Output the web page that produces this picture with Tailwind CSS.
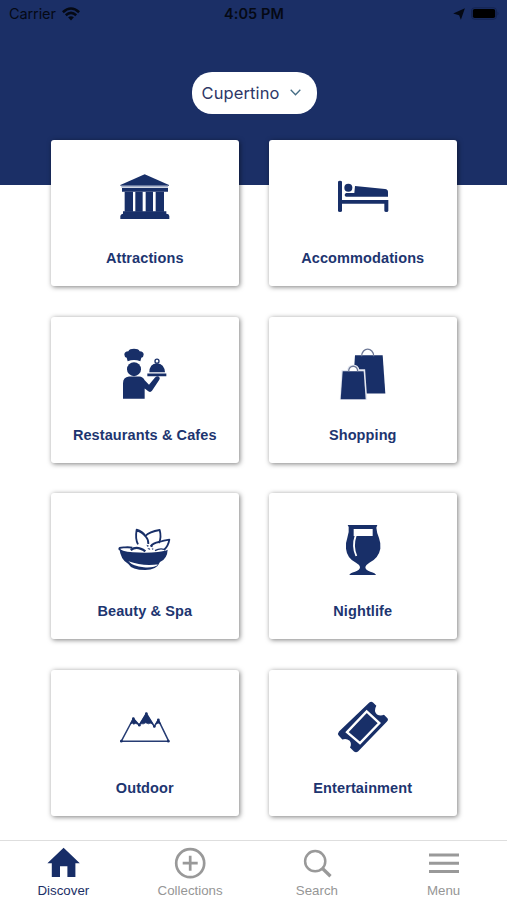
<!DOCTYPE html>
<html lang="en">
<head>
<meta charset="utf-8">
<title>Discover</title>
<script src="https://cdn.jsdelivr.net/npm/@tailwindcss/browser@4"></script>
</head>
<body class="bg-white">
<div class="relative flex h-[900px] w-[507px] flex-col overflow-hidden bg-white font-['Liberation_Sans',sans-serif] text-[#1d3570]">
  <div class="absolute inset-x-0 top-0 h-[185px] bg-[#1b2f66]"></div>

  <header class="relative grid h-7 shrink-0 grid-cols-3 items-center pl-[9px] pr-[8px] font-['Inter',sans-serif] text-[14.5px] text-[#050914]">
    <div class="flex items-center gap-[6px]">
      <span class="tracking-[-0.1px]">Carrier</span>
      <svg class="h-[14px] w-[18px]" viewBox="0 0 18 14" fill="none" stroke="currentColor" stroke-width="2.6"><path d="M.9 5.2Q9-2.2 17.1 5.2M3.8 8.2Q9 3.7 14.2 8.2"/><path d="M6.1 10.3Q9 8 11.9 10.3L9 13.4Z" fill="currentColor" stroke="none"/></svg>
    </div>
    <span class="text-center font-semibold tracking-[0.1px]">4:05 PM</span>
    <div class="flex items-center justify-end gap-[6px]">
      <svg class="mb-px h-3 w-3" viewBox="0 0 12 12" fill="currentColor"><path d="M11.9.2 7.9 11.8 6.1 7.2.2 5.6Z"/></svg>
      <svg class="mb-px h-[13px] w-[28px]" viewBox="0 0 28 13"><rect x=".5" y=".8" width="25" height="11.4" rx="3" fill="none" stroke="#142452"/><rect x="1.8" y="2" width="22.4" height="9" rx="1.8" fill="#000"/><path d="M26.5 4.5q2 2 0 4z" fill="#142452"/></svg>
    </div>
  </header>

  <div class="relative flex h-[112px] shrink-0 justify-center pl-px pt-[44px]">
    <button class="flex h-[42px] w-[125px] items-center gap-[10px] rounded-[20px] bg-white pl-[10px] font-['Inter',sans-serif] text-[16.5px] tracking-[0.12px] text-[#2e3767]">
      <span>Cupertino</span>
      <svg class="mb-[2px] h-[7px] w-[11px] shrink-0" viewBox="0 0 11 7" fill="none" stroke="#456d85" stroke-width="1.3"><path d="m.7.8 4.8 5 4.8-5"/></svg>
    </button>
  </div>

  <main class="relative grid shrink-0 grid-cols-[188.5px_188.5px] grid-rows-[146px_146px_146px_146px] gap-x-[29.5px] gap-y-[30.5px] pl-[50.5px] text-[14.5px] font-bold tracking-[0.1px]">
    <article class="flex flex-col items-center rounded-[3px] bg-white pt-5 shadow-[1px_1px_5px_rgba(0,0,0,0.5)]">
      <svg class="h-[70px] w-[90px]" viewBox="0 0 270 210" fill="#182f68"><path d="M61 75 134 43l73 32v2H61z"/><path d="M66 84h138v11H66z"/><path d="M74 95h25v60H74zm32 0h22v60h-22zm31 0h22v60h-22zm30 0h25v60h-25z"/><path d="M69 154h130v7q8 0 9 7v9H61v-9q1-6 8-7z"/><path d="M64 80h140" stroke="#a5b0ca" stroke-width="5"/></svg>
      <h2 class="mt-[17px] leading-[22px]">Attractions</h2>
    </article>
    <article class="flex flex-col items-center rounded-[3px] bg-white pt-5 shadow-[1px_1px_5px_rgba(0,0,0,0.5)]">
      <svg class="h-[70px] w-[90px]" viewBox="-6 0 270 210" fill="#182f68"><path d="M54 66q0-4 6-4t6 4v54h139v32q0 4-6 4t-6-4v-21H66v21q0 4-6 4t-6-4z"/><circle cx="85" cy="83" r="12"/><path d="M79 99h24l2-21 90 9q9 1 9 9v14H79q-5 0-5-5t5-6z"/></svg>
      <h2 class="mt-[17px] leading-[22px]">Accommodations</h2>
    </article>
    <article class="flex flex-col items-center rounded-[3px] bg-white pt-5 shadow-[1px_1px_5px_rgba(0,0,0,0.5)]">
      <svg class="h-[70px] w-[90px]" viewBox="0 4.5 270 210" fill="#182f68"><path d="M83 77 80 67q-7-2-7-10 0-9 12-10 4-7 17-7t17 7q12 1 12 10 0 8-7 10l-3 10q-19-7-38 0z"/><circle cx="102" cy="101" r="21"/><path d="M69 190v-47q0-18 18-20h31q10 0 16 11l13 14 18-22q6-6 11-3 6 4 2 10l-22 33q-5 6-11 1l-11-8v31z"/><path d="M142 114h57v8h-57zm6-4q0-25 23-27 22 2 24 27z"/><circle cx="171" cy="77" r="6" fill="none" stroke="#182f68" stroke-width="4"/></svg>
      <h2 class="mt-[17px] leading-[22px]">Restaurants &amp; Cafes</h2>
    </article>
    <article class="flex flex-col items-center rounded-[3px] bg-white pt-5 shadow-[1px_1px_5px_rgba(0,0,0,0.5)]">
      <svg class="h-[70px] w-[90px]" viewBox="-6 4.5 270 210" fill="#182f68"><path d="M105 59h83l8 115H98z"/><path d="M125 62c0-28 36-28 36 0" fill="none" stroke="#6d7896" stroke-width="4"/><path d="M67 106h17q0-16 15-16t17 14h17l6 86H62z" fill="#fff" stroke="#e3e7f0" stroke-width="5"/><path d="M68 107h63l6 84H62z"/><path d="M86 108c0-21 27-21 27 0" fill="none" stroke="#6d7896" stroke-width="4"/></svg>
      <h2 class="mt-[17px] leading-[22px]">Shopping</h2>
    </article>
    <article class="flex flex-col items-center rounded-[3px] bg-white pt-5 shadow-[1px_1px_5px_rgba(0,0,0,0.5)]">
      <svg class="h-[70px] w-[90px]" viewBox="0 -6 270 210" fill="#182f68"><g fill="none" stroke="#182f68" stroke-width="5.5" stroke-linejoin="round"><path d="M114 88Q105 72 110 44q17 4 26 19 12-13 43-18 6 22-2 39M110 46q17 5 26 18"/><path d="M136 63Q146 74 145 87"/><path d="M152 94q7-10 25-13 14-5 31-7-3 19-16 31"/><path d="M165 107q14-8 27-4" stroke-width="4"/><path d="M60 105Q52 96 75 97q12-1 22 1"/><path d="M92 105q14-10 29-4 9 3 15 8" stroke-width="7"/></g><path d="M58 99q3 10 41 13 45 3 74-1 22-3 30-7-1 27-23 37-10 24-44 24-41 0-51-18-24-13-27-48zm27 40q14 15 46 18 31 3 45-9-47 7-91-9z" fill-rule="evenodd"/><path d="m139 89 8 3-4 4zm11 6 9-5-2 7zm-8 6 6-2 3 6zm13-1 6 1-3 4z"/></svg>
      <h2 class="mt-[17px] leading-[22px]">Beauty &amp; Spa</h2>
    </article>
    <article class="flex flex-col items-center rounded-[3px] bg-white pt-5 shadow-[1px_1px_5px_rgba(0,0,0,0.5)]">
      <svg class="h-[70px] w-[90px]" viewBox="-6 -6 270 210" fill="#182f68"><path d="M83 30h89l-3 8q1 14 8 31 6 16 4 32-5 28-33 42-11 7-12 13 0 9 15 14 16 4 17 10H88q1-6 17-10 15-5 15-14-1-7-12-13-27-13-30-42-2-17 4-33 6-15 4-32z"/><path d="M101 42h57v21h-57z" fill="#fff"/><path d="M107 62q-11 32 2 61" fill="none" stroke="#fff" stroke-width="5.5"/></svg>
      <h2 class="mt-[17px] leading-[22px]">Nightlife</h2>
    </article>
    <article class="flex flex-col items-center rounded-[3px] bg-white pt-5 shadow-[1px_1px_5px_rgba(0,0,0,0.5)]">
      <svg class="h-[70px] w-[90px]" viewBox="0 -16.5 270 210" fill="none" stroke="#263c73" stroke-width="4.5" stroke-linejoin="round"><path d="M64 137 100 69l18 20 21-35 24 39 12-20 31 64z"/><path d="m91 86 9-18 16 19-9-3-6 2-4-3zm28-1 20-31 20 32-8-3-6 2-8-3-6 3zm48 0 8-13 7 14-6-3z" fill="#182f68" stroke="#182f68" stroke-width="2"/><g fill="#182f68" stroke="none"><circle cx="64" cy="137" r="4"/><circle cx="100" cy="69" r="4"/><circle cx="118" cy="89" r="4"/><circle cx="139" cy="54" r="4"/><circle cx="163" cy="93" r="4"/><circle cx="175" cy="73" r="4"/><circle cx="205" cy="137" r="4"/></g></svg>
      <h2 class="mt-[17px] leading-[22px]">Outdoor</h2>
    </article>
    <article class="flex flex-col items-center rounded-[3px] bg-white pt-5 shadow-[1px_1px_5px_rgba(0,0,0,0.5)]">
      <svg class="h-[70px] w-[90px]" viewBox="-6 -1.5 270 210" fill="#182f68"><path d="m57 123 91-87q6-5 11 0l10 10q-9 16 2 26 10 6 21 1l11 11q3 5-2 9l-87 90q-6 5-12 0l-12-12q6-11-1-20-10-9-22-4l-11-12q-4-6 1-12z"/><path d="m81 125 59-62 38 35-58 60z" fill="none" stroke="#fff" stroke-width="7"/></svg>
      <h2 class="mt-[17px] leading-[22px]">Entertainment</h2>
    </article>
  </main>

  <nav class="relative mt-auto grid h-[60px] shrink-0 grid-cols-4 border-t border-[#dedede] bg-white pt-[5px] text-[13.3px] text-[#969696]">
    <a class="flex flex-col items-center text-[#1b2f66]">
      <svg class="h-[34px] w-[34px]" viewBox="-.6 0 34 34" fill="#172d67"><path d="M17 1.8 33.2 17.2h-4.4V31h-8V20.2h-7.4V31H5.2V17.2H.8z"/></svg>
      <span class="mt-px leading-5">Discover</span>
    </a>
    <a class="flex flex-col items-center">
      <svg class="h-[34px] w-[34px]" viewBox="0 0 34 34" fill="none" stroke="#999" stroke-width="2.7"><circle cx="17.2" cy="17.2" r="14"/><path d="M17.2 9.7v15M9.7 17.2h15"/></svg>
      <span class="mt-px leading-5">Collections</span>
    </a>
    <a class="flex flex-col items-center">
      <svg class="h-[34px] w-[34px]" viewBox="0 0 34 34" fill="none" stroke="#999" stroke-width="2.5"><circle cx="15.2" cy="15.2" r="10.1"/><path d="m22.5 22.5 8 7.7" stroke-width="3.3"/></svg>
      <span class="mt-px leading-5">Search</span>
    </a>
    <a class="flex flex-col items-center">
      <svg class="h-[34px] w-[34px]" viewBox="0 0 34 34" stroke="#999" stroke-width="3"><path d="M2 9h30M2 17.2h30M2 25.5h30"/></svg>
      <span class="mt-px leading-5">Menu</span>
    </a>
  </nav>
</div>
</body>
</html>
